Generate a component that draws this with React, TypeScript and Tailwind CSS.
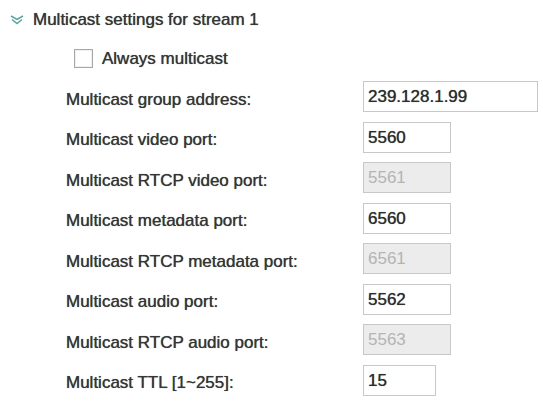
import React from "react";

type Row = { label: string; value: string; width: string; disabled?: boolean };

const rows: Row[] = [
  { label: "Multicast group address:", value: "239.128.1.99", width: "w-[175px]" },
  { label: "Multicast video port:", value: "5560", width: "w-[88px]" },
  { label: "Multicast RTCP video port:", value: "5561", width: "w-[88px]", disabled: true },
  { label: "Multicast metadata port:", value: "6560", width: "w-[88px]" },
  { label: "Multicast RTCP metadata port:", value: "6561", width: "w-[88px]", disabled: true },
  { label: "Multicast audio port:", value: "5562", width: "w-[88px]" },
  { label: "Multicast RTCP audio port:", value: "5563", width: "w-[88px]", disabled: true },
  { label: "Multicast TTL [1~255]:", value: "15", width: "w-[73px]" },
];

export default function App() {
  return (
    <div
      className="w-[543px] h-[401px] bg-white text-[#363636] overflow-hidden [text-shadow:0_0_0.7px_#444]"
      style={{ fontFamily: '"Liberation Sans", Arial, sans-serif' }}
    >
      <div className="flex items-center h-[38px] pl-[9px] gap-[8px]">
        <svg width="16" height="10" viewBox="0 0 16 10" className="mt-[1px]">
          <polyline points="2,1 8,4.5 14,1" fill="none" stroke="#5aa39c" strokeWidth="1.5" />
          <polyline points="3,4.5 8,8.5 13,4.5" fill="none" stroke="#5aa39c" strokeWidth="1.5" />
        </svg>
        <span className="text-[17px] leading-none pt-[1px]">Multicast settings for stream 1</span>
      </div>
      <div className="flex items-center h-[40px] pl-[74px] gap-[9px]">
        <div className="w-[19px] h-[19px] border border-[#a8a8a8] bg-white shadow-[inset_0_0_0_1px_#efefef]" />
        <span className="text-[17px] leading-none">Always multicast</span>
      </div>
      <div className="flex flex-col -mt-[1.75px]">
        {rows.map((r) => (
          <div key={r.label} className="flex items-center h-[40.5px]">
            <div className="w-[363px] pl-[66px] pt-[5px] text-[17px] leading-none">{r.label}</div>
            <div
              className={`${r.width} h-[31px] border border-[#c8c8c8] flex items-center pl-[4px] text-[17px] leading-none ${
                r.disabled ? "bg-[#ececec] text-[#b4b4b4] [text-shadow:none]" : "bg-white text-[#2e2e2e]"
              }`}
            >
              {r.value}
            </div>
          </div>
        ))}
      </div>
    </div>
  );
}
